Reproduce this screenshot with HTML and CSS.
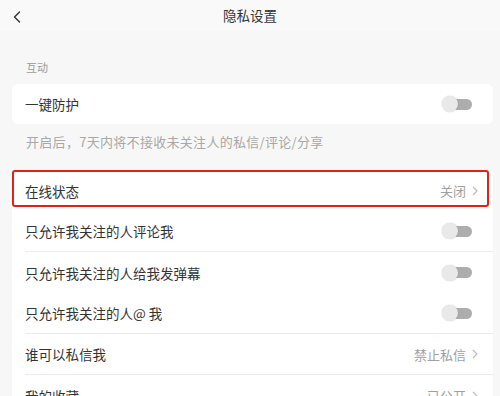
FILE: index.html
```html
<!DOCTYPE html>
<html lang="zh-CN">
<head>
<meta charset="utf-8">
<title>隐私设置</title>
<link rel="stylesheet" href="styles.css">
</head>
<body>
<div class="page">
  <header class="nav">
    <span class="back">
      <svg width="8" height="12" viewBox="0 0 8 12"><path d="M6.5 1 L1.5 6 L6.5 11" fill="none" stroke="#333" stroke-width="1.4" stroke-linecap="round" stroke-linejoin="round"/></svg>
    </span>
    <h1 class="title">隐私设置</h1>
    <span></span>
  </header>

  <div class="section-label">互动</div>

  <div class="card single">
    <div class="row last">
      <span class="label">一键防护</span>
      <span class="toggle"><span class="track"></span><span class="knob"></span></span>
    </div>
  </div>

  <p class="hint">开启后，7天内将不接收未关注人的私信/评论/分享</p>

  <div class="card list">
    <div class="row highlighted">
      <span class="label">在线状态</span>
      <span class="value">关闭<svg class="chev" width="6" height="10" viewBox="0 0 6 10"><path d="M1 1 L5 5 L1 9" fill="none" stroke="#bbb" stroke-width="1.1"/></svg></span>
      <span class="mark"></span>
    </div>
    <div class="row divided">
      <span class="label">只允许我关注的人评论我</span>
      <span class="toggle"><span class="track"></span><span class="knob"></span></span>
    </div>
    <div class="row">
      <span class="label">只允许我关注的人给我发弹幕</span>
      <span class="toggle"><span class="track"></span><span class="knob"></span></span>
    </div>
    <div class="row divided">
      <span class="label">只允许我关注的人@ 我</span>
      <span class="toggle"><span class="track"></span><span class="knob"></span></span>
    </div>
    <div class="row divided">
      <span class="label">谁可以私信我</span>
      <span class="value">禁止私信<svg class="chev" width="6" height="10" viewBox="0 0 6 10"><path d="M1 1 L5 5 L1 9" fill="none" stroke="#bbb" stroke-width="1.1"/></svg></span>
    </div>
    <div class="row">
      <span class="label">我的收藏</span>
      <span class="value">已公开<svg class="chev" width="6" height="10" viewBox="0 0 6 10"><path d="M1 1 L5 5 L1 9" fill="none" stroke="#bbb" stroke-width="1.1"/></svg></span>
    </div>
  </div>
</div>
</body>
</html>
```

FILE: styles.css
```css
* { box-sizing: border-box; }
html, body { margin: 0; padding: 0; }
body {
  width: 500px;
  height: 396px;
  overflow: hidden;
  background: #f7f7f7;
  font-family: "Noto Sans CJK SC", "Noto Sans", sans-serif;
  color: #333;
}
.page { display: flex; flex-direction: column; }
.nav {
  height: 30px;
  display: grid;
  grid-template-columns: 40px 1fr 40px;
  align-items: center;
  background: #f9f9f9;
}
.back { display: flex; padding-left: 13px; padding-top: 3px; }
.title {
  margin: 0;
  text-align: center;
  font-size: 13.5px;
  font-weight: 400;
  color: #333;
  line-height: 30px;
}
.section-label {
  margin: 29px 0 0 26px;
  font-size: 11px;
  line-height: 16px;
  color: #9a9a9a;
}
.card {
  background: #fff;
  margin: 9px 7px 0 12px;
  border-radius: 6px;
}
.hint {
  margin: 9px 0 0 26px;
  font-size: 13px;
  letter-spacing: 0.3px;
  line-height: 18px;
  color: #a8a8a8;
}
.card.list { margin-top: 19px; border-radius: 4px; }
.row {
  position: relative;
  height: 41px;
  margin-left: 13px;
  padding-right: 15px;
  display: flex;
  align-items: center;
  justify-content: space-between;
  font-size: 13.5px;
}
.card.single .row { height: 40px; }
.row.divided { border-bottom: 1px solid #ececec; }
.label { color: #333; }
.value {
  display: flex;
  align-items: center;
  gap: 6px;
  font-size: 13px;
  color: #a0a0a0;
}
.chev { display: block; }
.toggle {
  position: relative;
  width: 30px;
  height: 16px;
  margin-right: 6px;
}
.track {
  position: absolute;
  right: 0;
  top: 2.5px;
  width: 22px;
  height: 11px;
  border-radius: 6px;
  background: #adadad;
}
.knob {
  position: absolute;
  left: 0;
  top: 0;
  width: 16px;
  height: 16px;
  border-radius: 50%;
  background: #e9e9e9;
  box-shadow: 0 0 1.5px rgba(0,0,0,0.2);
}
.mark {
  position: absolute;
  left: -13px;
  top: 0;
  width: 477px;
  height: 37px;
  border: 2px solid #e3211c;
  border-radius: 3px;
  pointer-events: none;
}
```
